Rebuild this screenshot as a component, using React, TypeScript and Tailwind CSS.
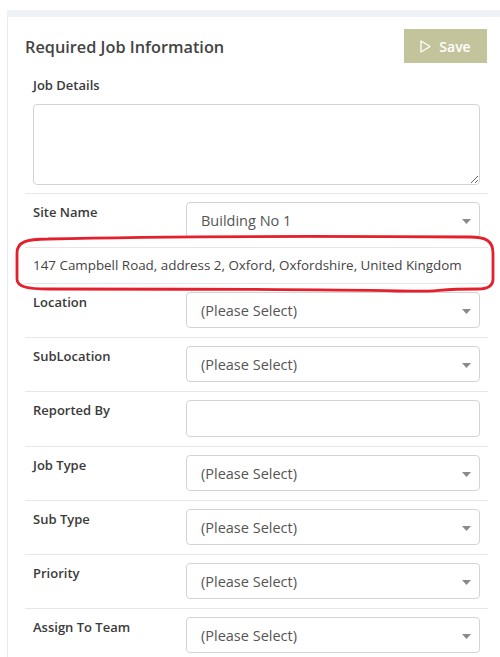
import React from "react";

const font = { fontFamily: "'Open Sans', Lato, Arial, sans-serif" };

function Caret() {
  return (
    <svg width="9" height="5" viewBox="0 0 9 5" className="shrink-0">
      <path d="M0 0 H9 L4.5 5 Z" fill="#8a8a8a" />
    </svg>
  );
}

function SelectBox({ value }: { value: string }) {
  return (
    <div className="w-[294px] h-[36px] border border-[#d4d4d4] rounded-[4px] bg-white flex items-center justify-between pl-[14px] pr-[8px] pt-[2px]">
      <span className="text-[14.5px] text-[#555555]">{value}</span>
      <Caret />
    </div>
  );
}

function Row({ label, children }: { label: string; children: React.ReactNode }) {
  return (
    <div className="border-t border-[#e6e6e6] flex pt-[8px] pb-[9px] px-[8px]">
      <div className="w-[153px] pt-[1px] text-[13px] font-semibold text-[#3a3a3a] leading-[18px]">{label}</div>
      {children}
    </div>
  );
}

export default function App() {
  return (
    <div className="w-[500px] h-[657px] bg-white overflow-hidden pt-[10px]" style={font}>
      <div className="ml-[7px] h-[7px] bg-[#eef1f5]" />
      <div className="relative ml-[7px] w-[498px] border-l border-[#e8ebef] px-[17px]">
        {/* header */}
        <div className="flex items-start justify-between pt-[12px]">
          <h2 className="mt-[6px] text-[16.3px] font-semibold text-[#444444]">Required Job Information</h2>
          <button className="mr-[1px] w-[83px] h-[34px] bg-[#c4c49c] text-white text-[14px] font-semibold flex items-center justify-center gap-[8px]">
            <svg width="11" height="13" viewBox="0 0 11 13">
              <path d="M1 1 L10 6.5 L1 12 Z" fill="none" stroke="white" strokeWidth="1.3" strokeLinejoin="round" />
            </svg>
            <span>Save</span>
          </button>
        </div>

        {/* job details */}
        <div className="px-[8px]">
          <div className="mt-[13px] text-[13px] font-semibold text-[#3a3a3a] leading-[18px]">Job Details</div>
          <textarea className="mt-[10px] block w-full h-[81px] border border-[#d4d4d4] rounded-[4px] resize-y" />
        </div>

        <div className="mt-[8px]">
          <Row label="Site Name">
            <SelectBox value="Building No 1" />
          </Row>
          <div className="border-t border-[#e6e6e6] h-[36px] px-[8px] flex items-center">
            <span className="text-[13.4px] text-[#444444]">
              147 Campbell Road, address 2, Oxford, Oxfordshire, United Kingdom
            </span>
          </div>
          <Row label="Location">
            <SelectBox value="(Please Select)" />
          </Row>
          <Row label="SubLocation">
            <SelectBox value="(Please Select)" />
          </Row>
          <Row label="Reported By">
            <input className="w-[294px] h-[37px] border border-[#d4d4d4] rounded-[4px]" />
          </Row>
          <Row label="Job Type">
            <SelectBox value="(Please Select)" />
          </Row>
          <Row label="Sub Type">
            <SelectBox value="(Please Select)" />
          </Row>
          <Row label="Priority">
            <SelectBox value="(Please Select)" />
          </Row>
          <Row label="Assign To Team">
            <SelectBox value="(Please Select)" />
          </Row>
        </div>

        {/* hand-drawn red highlight around the address line */}
        <svg
          className="absolute pointer-events-none"
          style={{ left: 0, top: 214 }}
          width="498"
          height="62"
          viewBox="0 0 498 62"
        >
          <path
            d="M40 8 C 120 6, 300 5, 462 6 C 478 6, 485 10, 485 22 L 485 48 C 485 56, 478 58, 470 58 C 420 58, 440 61, 390 60 C 300 58, 150 58, 40 58 C 20 58, 9 56, 9 48 L 9 22 C 9 11, 18 8, 40 8 Z"
            fill="none"
            stroke="#e3202b"
            strokeWidth="2.8"
            strokeLinejoin="round"
          />
        </svg>
      </div>
    </div>
  );
}
